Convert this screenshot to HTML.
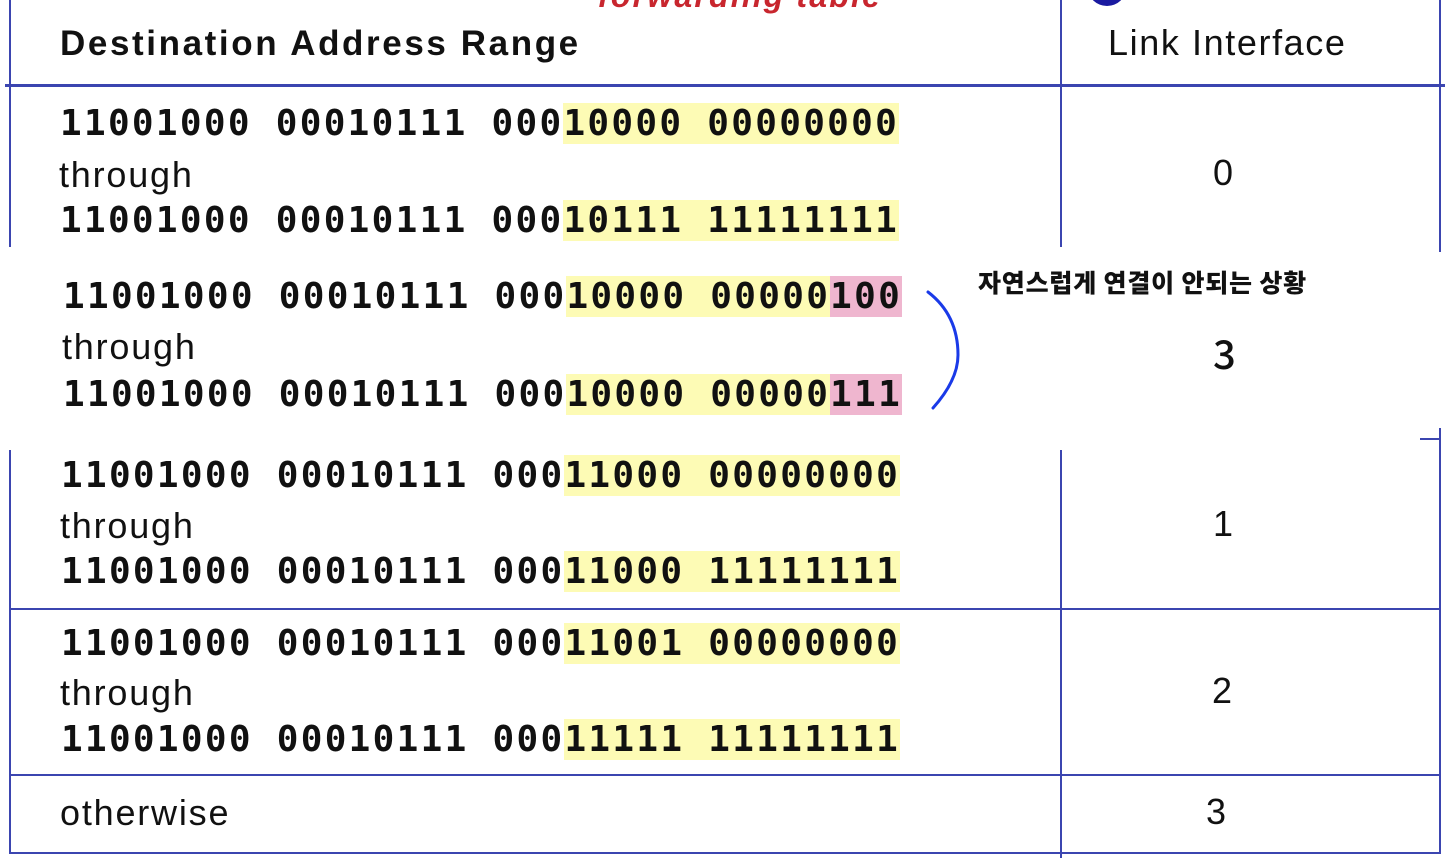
<!DOCTYPE html>
<html><head><meta charset="utf-8"><style>
body{margin:0;width:1450px;height:858px;background:#fff;position:relative;overflow:hidden;font-family:"Liberation Sans",sans-serif;color:#111}
.a{position:absolute}
.v{position:absolute;width:2px;background:#3b45b0}
.h{position:absolute;height:2px;background:#3b45b0}
.b{position:absolute;font-family:"DejaVu Sans Mono",monospace;font-weight:bold;font-size:36px;letter-spacing:2.3px;line-height:40px;white-space:pre}
.y{background:#fdfbb5}
.p{background:#efb6cf}
.t{position:absolute;font-size:36px;line-height:40px;letter-spacing:1.8px}
.n{position:absolute;font-size:36px;line-height:40px}
</style></head><body>
<div class="v" style="left:9px;top:0;height:247px"></div>
<div class="v" style="left:9px;top:450px;height:404px"></div>
<div class="v" style="left:1060px;top:0;height:247px"></div>
<div class="v" style="left:1060px;top:450px;height:408px"></div>
<div class="v" style="left:1439px;top:0;height:252px"></div>
<div class="v" style="left:1439px;top:428px;height:426px"></div>
<div class="h" style="left:1420px;top:438px;width:20px"></div>
<div class="h" style="left:5px;top:84px;width:1440px;height:3px"></div>
<div class="h" style="left:9px;top:608px;width:1432px"></div>
<div class="h" style="left:9px;top:774px;width:1432px"></div>
<div class="h" style="left:9px;top:852px;width:1432px"></div>

<div class="a" style="left:598px;top:-22px;color:#c8262e;font-style:italic;font-weight:bold;font-size:32px;letter-spacing:2.2px">forwarding table</div>
<div class="a" style="left:1088px;top:-30px;width:38px;height:36px;border-radius:50%;background:#1a1aa0"></div>

<div class="a" style="left:60px;top:24px;font-weight:bold;font-size:35px;letter-spacing:2.6px">Destination Address Range</div>
<div class="a" style="left:1108px;top:22px;font-size:36px;letter-spacing:1.6px">Link Interface</div>

<div class="b" style="left:60px;top:104px">11001000 00010111 000<span class="y">10000 00000000</span></div>
<div class="t" style="left:59px;top:155px">through</div>
<div class="b" style="left:60px;top:201px">11001000 00010111 000<span class="y">10111 11111111</span></div>
<div class="n" style="left:1213px;top:153px">0</div>

<div class="b" style="left:63px;top:277px">11001000 00010111 000<span class="y">10000 00000</span><span class="p">100</span></div>
<div class="t" style="left:62px;top:327px">through</div>
<div class="b" style="left:63px;top:375px">11001000 00010111 000<span class="y">10000 00000</span><span class="p">111</span></div>
<div class="a" style="left:978px;top:264px;font-family:'Noto Sans CJK KR',sans-serif;font-weight:900;font-size:25px;letter-spacing:0.8px">자연스럽게 연결이 안되는 상황</div>
<div class="a" style="left:1213px;top:330px;font-family:'Noto Sans CJK KR',sans-serif;font-weight:500;font-size:40px;line-height:44px">3</div>
<svg class="a" style="left:920px;top:285px" width="50" height="130"><path d="M8 7 Q38 30 38 70 Q38 95 13 123" fill="none" stroke="#1a3ae8" stroke-width="3" stroke-linecap="round"/></svg>

<div class="b" style="left:61px;top:456px">11001000 00010111 000<span class="y">11000 00000000</span></div>
<div class="t" style="left:60px;top:506px">through</div>
<div class="b" style="left:61px;top:552px">11001000 00010111 000<span class="y">11000 11111111</span></div>
<div class="n" style="left:1213px;top:504px">1</div>

<div class="b" style="left:61px;top:624px">11001000 00010111 000<span class="y">11001 00000000</span></div>
<div class="t" style="left:60px;top:673px">through</div>
<div class="b" style="left:61px;top:720px">11001000 00010111 000<span class="y">11111 11111111</span></div>
<div class="n" style="left:1212px;top:671px">2</div>

<div class="t" style="left:60px;top:793px">otherwise</div>
<div class="n" style="left:1206px;top:792px">3</div>
</body></html>
